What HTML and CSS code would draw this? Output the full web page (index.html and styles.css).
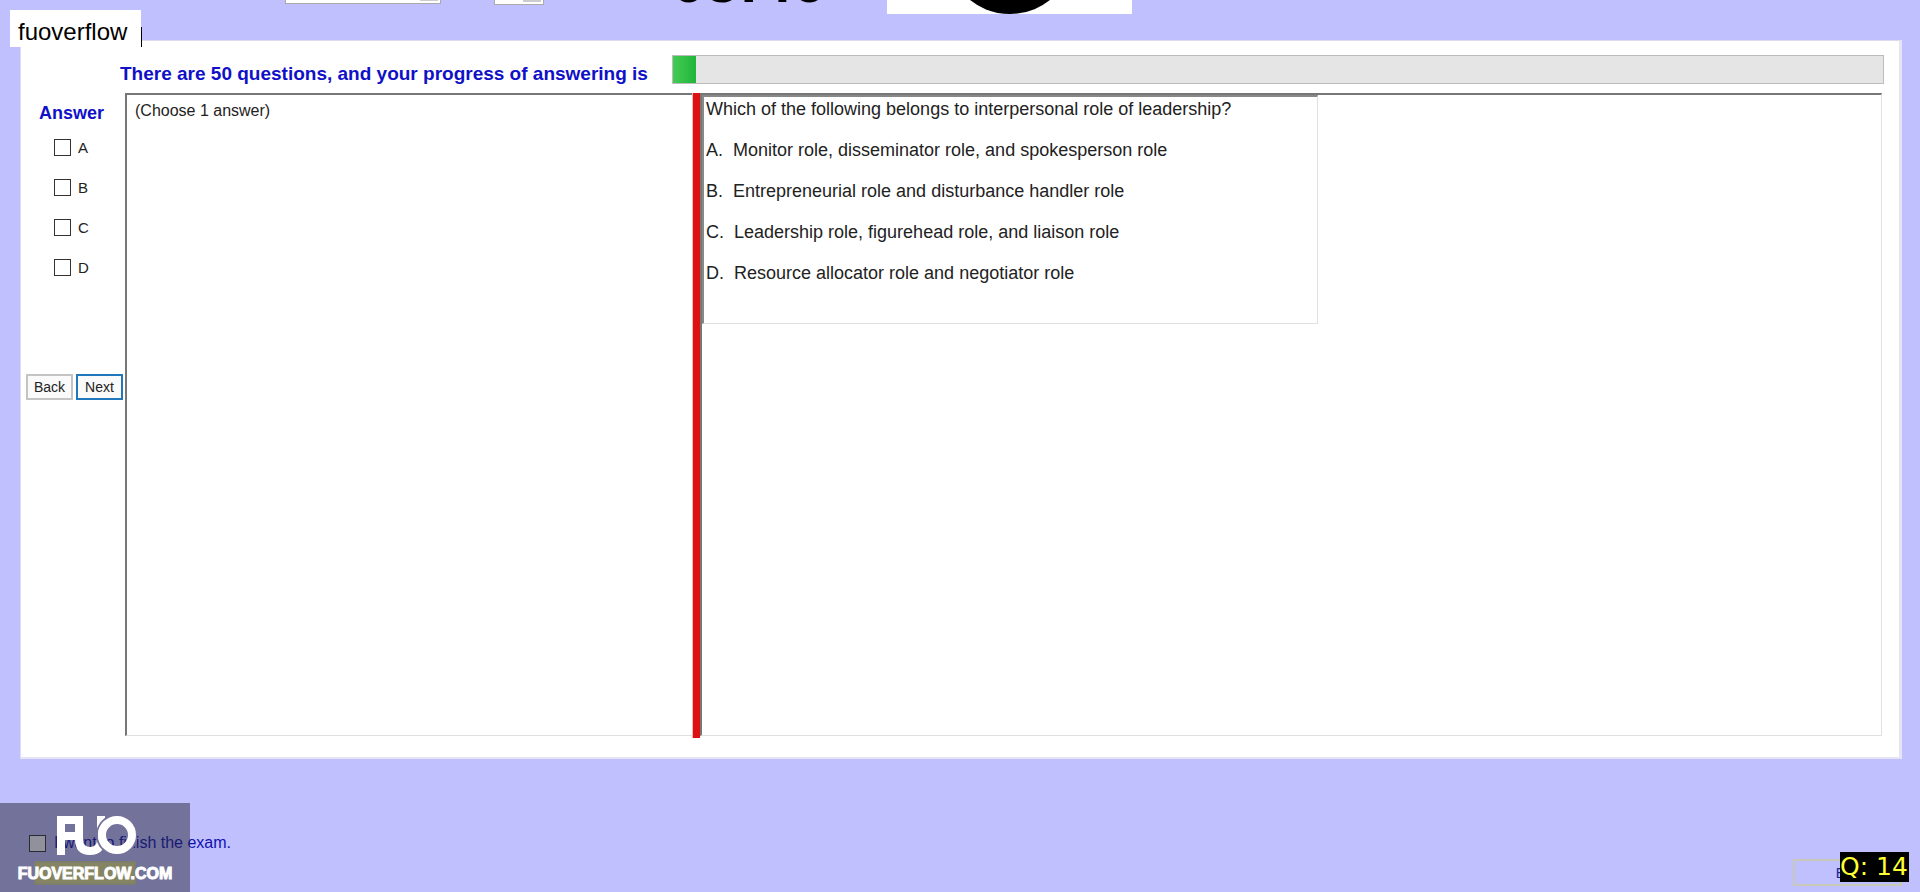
FILE: index.html
```
<!DOCTYPE html>
<html lang="en">
<head>
    <meta charset="UTF-8">
    <meta name="viewport" content="width=device-width, initial-scale=1.0">
    <title>Exam</title>
    <link rel="stylesheet" href="styles.css">
</head>
<body>
    <header class="topbar">
        <select class="font-select" aria-label="Font"><option></option></select>
        <select class="size-select" aria-label="Size"><option></option></select>
        <div class="timer">03:46</div>
        <div class="photo">
            <svg width="128" height="128" viewBox="0 0 128 128"><circle cx="64" cy="64" r="64" fill="#000"/></svg>
        </div>
        <div class="site-tag">fuoverflow</div>
    </header>

    <main class="exam">
        <div class="progress-row">
            <div class="progress-label">There are 50 questions, and your progress of answering is</div>
            <div class="progress"><div class="progress-fill"></div></div>
        </div>

        <div class="work">
            <div class="answers">
                <h2>Answer</h2>
                <label><input type="checkbox">A</label>
                <label><input type="checkbox">B</label>
                <label><input type="checkbox">C</label>
                <label><input type="checkbox">D</label>
                <div class="nav">
                    <button>Back</button>
                    <button class="next">Next</button>
                </div>
            </div>
            <div class="note-pane">(Choose 1 answer)</div>
            <div class="splitter"></div>
            <div class="question-pane">
                <div class="question">
                    <p>Which of the following belongs to interpersonal role of leadership?</p>
                    <p>A.&nbsp; Monitor role, disseminator role, and spokesperson role</p>
                    <p>B.&nbsp; Entrepreneurial role and disturbance handler role</p>
                    <p>C.&nbsp; Leadership role, figurehead role, and liaison role</p>
                    <p>D.&nbsp; Resource allocator role and negotiator role</p>
                </div>
            </div>
        </div>
    </main>

    <footer class="bottom">
        <div class="finish">
            <label><input type="checkbox">I want to finish the exam.</label>
            <button class="finish-button" aria-label="Finish"></button>
        </div>
        <button class="exit">Exit</button>
        <div class="watermark">
            <svg width="84" height="42" viewBox="0 0 84 42" fill="none" stroke="#fff" stroke-width="8">
                <path d="M8 41V6H24M8 22H22"/>
                <path d="M26 2V25Q26 37 37 37Q48 37 48 25V2"/>
                <circle cx="64" cy="21" r="20" stroke="#75729b" stroke-width="2"/>
                <circle cx="64" cy="21" r="15"/>
            </svg>
            <div class="watermark-text">FUOVERFLOW.COM</div>
        </div>
        <div class="counter">Q: 14</div>
    </footer>
</body>
</html>
```
FILE: styles.css
```
* {
    box-sizing: border-box;
}

body {
    margin: 0;
    min-height: 100vh;
    display: flex;
    flex-direction: column;
    overflow: hidden;
    background-color: #c0c0ff;
    color: #222;
    font-family: "Liberation Sans", Arial, sans-serif;
    font-size: 16px;
}

/* top strip, scrolled mostly out of view */
.topbar {
    position: relative;
    display: flex;
    align-items: flex-start;
    height: 40px;
    padding-left: 285px;
}

.topbar select {
    appearance: none;
    height: 24px;
    margin-top: -20px;
    border: 1px solid #aaa;
    border-radius: 0;
    background: linear-gradient(#ccc, #ccc) right 2px top / 18px 20px no-repeat #fff;
}

.font-select {
    width: 156px;
}

.topbar .size-select {
    width: 50px;
    margin-left: 53px;
    margin-top: -19px;
}

.timer {
    width: 215px;
    margin-top: -52px;
    padding-left: 128px;
    box-sizing: content-box;
    color: #000;
    font-size: 60px;
    font-weight: bold;
    line-height: 68px;
}

.photo {
    display: flex;
    justify-content: center;
    width: 245px;
    height: 128px;
    margin-top: -114px;
    background-color: #fff;
}

.site-tag {
    position: absolute;
    left: 10px;
    top: 10px;
    width: 131px;
    height: 37px;
    padding-left: 8px;
    background-color: #fff;
    color: #000;
    font-size: 24px;
    line-height: 43px;
}

.site-tag::after {
    content: "";
    position: absolute;
    right: -1px;
    top: 17px;
    width: 1px;
    height: 20px;
    background-color: #000;
}

.exam {
    margin: 0 18px 0 20px;
    padding: 14px 15px 19px 5px;
    border: 1px solid #dcdcf0;
    border-right: 3px solid #e4e4f4;
    border-bottom: 2px solid #e4e4f4;
    background-color: #fff;
}

.progress-row {
    display: flex;
    height: 38px;
}

.progress-label {
    width: 552px;
    margin-left: 94px;
    flex: none;
    color: #1010c8;
    font-size: 19px;
    font-weight: bold;
    line-height: 38px;
}

.progress {
    flex: 1;
    height: 29px;
    border: 1px solid #bcbcbc;
    background-color: #e5e5e5;
}

.progress-fill {
    width: 23px;
    height: 27px;
    background: linear-gradient(90deg, #44cc55, #22b43a);
}

.work {
    display: flex;
    height: 645px;
    padding-right: 2px;
}

.answers {
    width: 99px;
    flex: none;
    padding-top: 10px;
}

.answers h2 {
    margin: 0 0 14px;
    padding-left: 13px;
    color: #1010c8;
    font-size: 18px;
    line-height: 20px;
}

.answers label {
    display: flex;
    align-items: center;
    gap: 7px;
    height: 20px;
    margin-bottom: 20px;
    padding-left: 28px;
    font-size: 15px;
}

input[type="checkbox"] {
    appearance: none;
    width: 17px;
    height: 17px;
    margin: 0;
    border: 1px solid #333;
    background-color: #fff;
}

.nav {
    display: flex;
    gap: 3px;
    padding-top: 77px;
}

.nav button {
    width: 47px;
    height: 26px;
    padding: 0;
    border: 2px solid #c4c4c4;
    background-color: #fafafa;
    color: #222;
    font-family: inherit;
    font-size: 14px;
}

.nav .next {
    border: 2px solid #2277bb;
}

.note-pane {
    width: 567px;
    height: 643px;
    padding: 6px 8px;
    border: 2px solid #777;
    border-right: 0;
    border-bottom: 1px solid #e0e0e0;
    line-height: 20px;
}

.splitter {
    width: 8px;
    border-left: 1px solid #f4b8b8;
    background-color: #dd1111;
}

.question-pane {
    flex: 1;
    height: 643px;
    border: 2px solid #777;
    border-right: 1px solid #e0e0e0;
    border-bottom: 1px solid #e0e0e0;
}

.question {
    width: 616px;
    padding: 0 2px 21px;
    border: 2px solid #888;
    border-right: 1px solid #e0e0e0;
    border-bottom: 1px solid #e0e0e0;
    font-size: 18px;
}

.question p {
    margin: 0 0 17px;
    line-height: 24px;
}

.bottom {
    position: relative;
    flex: 1;
    display: flex;
    justify-content: space-between;
    align-items: flex-start;
    padding: 75px 18px 0 29px;
}

.finish label {
    display: flex;
    align-items: center;
    gap: 8px;
    color: #1010b0;
}

.finish-button {
    display: block;
    width: 102px;
    height: 24px;
    margin: 9px 0 0 5px;
    border: 2px solid #d8d8a0;
    background-color: #e6e690;
}

.exit {
    width: 109px;
    height: 27px;
    margin-top: 25px;
    padding: 0;
    border: 2px solid #c8c8b8;
    background-color: #c0c0ff;
    color: #202088;
    font-family: inherit;
    font-size: 14px;
}

.watermark {
    position: absolute;
    left: 0;
    bottom: 0;
    width: 190px;
    height: 89px;
    padding-top: 11px;
    background-color: rgba(35, 35, 55, 0.5);
    text-align: center;
}

.watermark svg {
    display: block;
    margin: 0 auto;
}

.watermark-text {
    color: #fff;
    font-size: 16px;
    font-weight: bold;
    line-height: 36px;
    -webkit-text-stroke: 1px #fff;
}

.counter {
    position: absolute;
    right: 11px;
    bottom: 10px;
    width: 69px;
    height: 30px;
    background-color: #000;
    color: #ffff33;
    font-family: "DejaVu Sans", sans-serif;
    font-size: 25px;
    line-height: 30px;
    white-space: nowrap;
}
```
